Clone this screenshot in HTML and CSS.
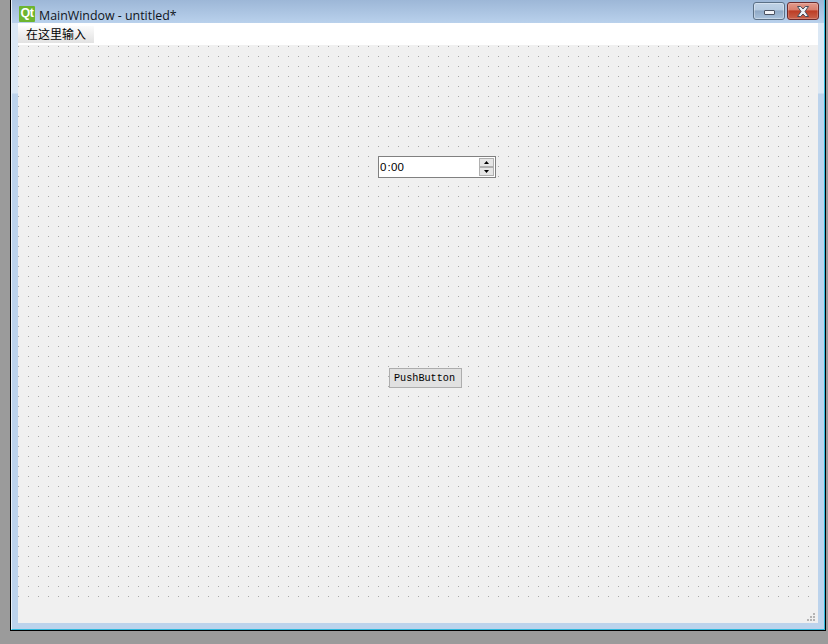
FILE: index.html
```html
<!DOCTYPE html>
<html lang="zh-CN">
<head>
<meta charset="utf-8">
<title>MainWindow - untitled*</title>
<link rel="stylesheet" href="styles.css">
</head>
<body>
<div class="window">
  <header class="titlebar">
    <div class="qt-logo">Qt</div>
    <div class="title">MainWindow - untitled*</div>
    <div class="controls">
      <div class="btn-min"><span class="min-glyph"></span></div>
      <div class="btn-close">
        <svg width="14" height="11" viewBox="0 0 14 11"><path d="M1.500 .5h3.200L7 3l2.300-2.500h3.200L9 5.500l3.500 5H9.300L7 8l-2.300 2.500H1.500L5 5.500z" fill="#eef1f6" stroke="#454c5a" stroke-width="1"/></svg>
      </div>
    </div>
  </header>
  <div class="frame">
    <nav class="menubar"><span class="menu-item">在这里输入</span></nav>
    <main class="canvas">
      <div class="timeedit">
        <span class="time-text">0<span class="time-colon">:</span>00</span>
        <div class="spin">
          <div class="spin-btn"><svg width="5" height="3" viewBox="0 0 5 3"><path d="M2.500 0L5 3H0z" fill="#000"/></svg></div>
          <div class="spin-btn"><svg width="5" height="3" viewBox="0 0 5 3"><path d="M0 0h5L2.500 3z" fill="#000"/></svg></div>
        </div>
      </div>
      <button class="pushbutton">PushButton</button>
      <svg class="grip" width="8" height="8" viewBox="0 0 8 8"><path fill="#b4b4b4" d="M6 0h2v2H6zM6 3h2v2H6zM3 3h2v2H3zM6 6h2v2H6zM3 6h2v2H3zM0 6h2v2H0z"/></svg>
    </main>
  </div>
</div>
</body>
</html>
```
FILE: styles.css
```css
html, body { margin: 0; padding: 0; }
body {
  width: 828px;
  height: 644px;
  background: #9b9b9b;
  overflow: hidden;
  font-family: "Liberation Sans", "Noto Sans CJK SC", sans-serif;
}
.window {
  box-sizing: border-box;
  width: 816px;
  height: 631px;
  margin-left: 10px;
  border-left: 1px solid #000;
  border-right: 1px solid #000;
  border-bottom: 1px solid #000;
  display: flex;
  flex-direction: column;
}
.titlebar {
  box-sizing: border-box;
  height: 23px;
  flex: none;
  display: flex;
  padding-left: 7px;
  border-left: 1px solid #e8f0f8;
  border-right: 1px solid #2fb8dc;
  background: linear-gradient(#9db7d7, #b9d1ec);
}
.qt-logo {
  width: 16px;
  height: 16px;
  margin-top: 6px;
  background: #6db52f;
  color: #fff;
  font: bold 12.500px/15px "Liberation Sans", sans-serif;
  letter-spacing: -0.5px;
  text-align: center;
  border-radius: 1px;
}
.title {
  margin-left: 4px;
  margin-top: 7px;
  font: 12.400px/18px "Open Sans", sans-serif;
  color: #10151c;
}
.controls {
  margin-left: auto;
  margin-right: 5px;
  margin-top: 2px;
  display: flex;
  gap: 2px;
  align-self: flex-start;
}
.btn-min, .btn-close {
  box-sizing: border-box;
  width: 32px;
  height: 18px;
  border-radius: 3px;
  display: flex;
  align-items: center;
  justify-content: center;
}
.btn-min {
  border: 1px solid #5b7086;
  background: linear-gradient(#bfd2e6 0, #b6cbe1 42%, #8fa9c6 50%, #a9c2dc 100%);
  box-shadow: inset 0 0 0 1px rgba(255, 255, 255, .35);
}
.min-glyph {
  box-sizing: border-box;
  width: 11px;
  height: 5px;
  margin-top: 3px;
  background: #f2f4f8;
  border: 1px solid #4a5160;
  border-radius: 1px;
}
.btn-close {
  border: 1px solid #6b2a2c;
  background: linear-gradient(#e39a8c 0, #d97f6e 42%, #bc3d25 50%, #c9624b 100%);
  box-shadow: inset 0 0 0 1px rgba(255, 255, 255, .2);
}
.frame {
  flex: 1;
  min-height: 0;
  display: flex;
  flex-direction: column;
  padding: 0 6px 6px 6px;
  border-left: 1px solid #e8f0f8;
  border-bottom: 1px solid #2fb8dc;
  border-right: 1px solid #2fb8dc;
  background: linear-gradient(#dbe8f5 0, #dbe8f5 70px, #bcd3ec 71px);
}
.menubar {
  height: 22px;
  flex: none;
  background: #fff;
  display: flex;
}
.menu-item {
  box-sizing: border-box;
  width: 76px;
  height: 17px;
  margin-top: 3px;
  padding-left: 8px;
  font-size: 12px;
  line-height: 18px;
  color: #000;
  background: linear-gradient(#fbfbfb, #e2e2e2);
}
.canvas {
  flex: 1;
  position: relative;
  background-color: #f0f0f0;
}
.canvas::before {
  content: "";
  position: absolute;
  left: 0;
  top: 1px;
  right: 9px;
  bottom: 26px;
  background: linear-gradient(to right, #a8a8a8 1px, transparent 1px) 0 0 / 10px 10px;
  -webkit-mask: linear-gradient(to bottom, #000 1px, transparent 1px) 0 0 / 10px 10px;
  mask: linear-gradient(to bottom, #000 1px, transparent 1px) 0 0 / 10px 10px;
}
.timeedit {
  position: absolute;
  left: 360px;
  top: 111px;
  box-sizing: border-box;
  width: 118px;
  height: 22px;
  background: #fff;
  border: 1px solid #808080;
  display: flex;
  align-items: center;
  justify-content: space-between;
  padding-left: 1px;
}
.time-text {
  font: 11.500px "Liberation Sans", sans-serif;
  color: #000;
}
.time-colon {
  margin: 0 0.5px 0 1px;
}
.spin {
  width: 15px;
  height: 18px;
  margin-right: 1px;
  display: flex;
  flex-direction: column;
}
.spin-btn {
  flex: 1;
  box-sizing: border-box;
  border: 1px solid #b0b0b0;
  background: #e6e6e6;
  display: flex;
  align-items: center;
  justify-content: center;
}
.pushbutton {
  position: absolute;
  left: 371px;
  top: 323px;
  box-sizing: border-box;
  width: 73px;
  height: 20px;
  padding: 0 2px 0 0;
  background: #e1e1e1;
  border: 1px solid #adadad;
  font: 10.200px "Liberation Mono", monospace;
  color: #000;
}
.grip {
  position: absolute;
  right: 3px;
  bottom: 2px;
}
```
